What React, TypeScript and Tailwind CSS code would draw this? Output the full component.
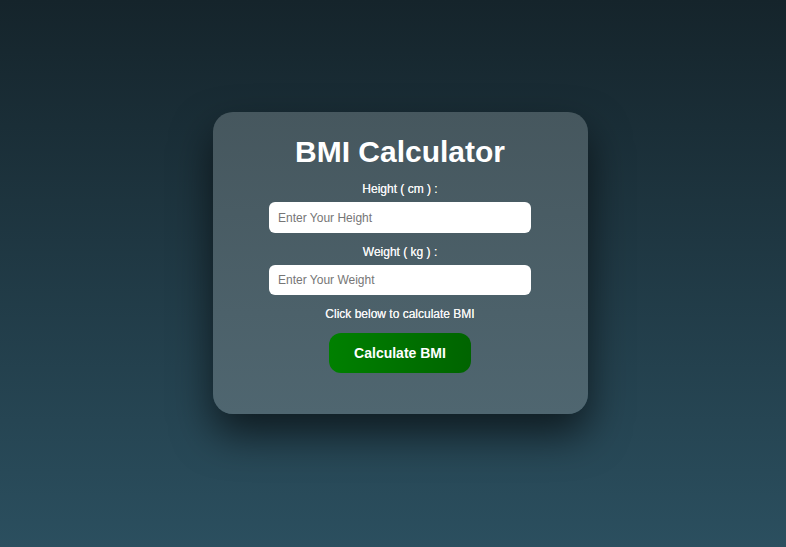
import { useState } from 'react'

export default function App() {
  const [height, setHeight] = useState('')
  const [weight, setWeight] = useState('')

  return (
    <div className="flex min-h-[547px] w-full items-center justify-center bg-[linear-gradient(to_bottom,#15242b,#2b4f5f)] pb-[21px] pl-[14px] font-['Liberation_Sans',Arial,sans-serif]">
      <div className="flex w-[375px] h-[302px] flex-col items-center rounded-[20px] bg-[linear-gradient(to_bottom,#46575e,#4f6670)] pt-[22px] shadow-[0_20px_40px_rgba(0,0,0,0.6)]">
        <h1 className="text-[30px] font-bold leading-[36px] text-white">BMI Calculator</h1>

        <label className="mt-[12px] text-[12px] leading-[14px] text-[#f4f4f4] [text-shadow:0_0_0.6px_#fff]">Height ( cm ) :</label>
        <input
          value={height}
          onChange={(e) => setHeight(e.target.value)}
          placeholder="Enter Your Height"
          className="mt-[6px] h-[31px] w-[262px] rounded-[6px] bg-white pl-[9px] text-[12px] text-[#333] placeholder:text-[#767676] outline-none"
        />

        <label className="mt-[12px] text-[12px] leading-[14px] text-[#f4f4f4] [text-shadow:0_0_0.6px_#fff]">Weight ( kg ) :</label>
        <input
          value={weight}
          onChange={(e) => setWeight(e.target.value)}
          placeholder="Enter Your Weight"
          className="mt-[6px] h-[30px] w-[262px] rounded-[6px] bg-white pl-[9px] text-[12px] text-[#333] placeholder:text-[#767676] outline-none"
        />

        <p className="mt-[12px] text-[12px] leading-[14px] text-[#f4f4f4] [text-shadow:0_0_0.6px_#fff]">Click below to calculate BMI</p>

        <button className="mt-[12px] h-[40px] w-[142px] rounded-[12px] bg-[linear-gradient(to_right,#008000,#006400)] text-[14px] font-bold text-white">
          Calculate BMI
        </button>
      </div>
    </div>
  )
}
